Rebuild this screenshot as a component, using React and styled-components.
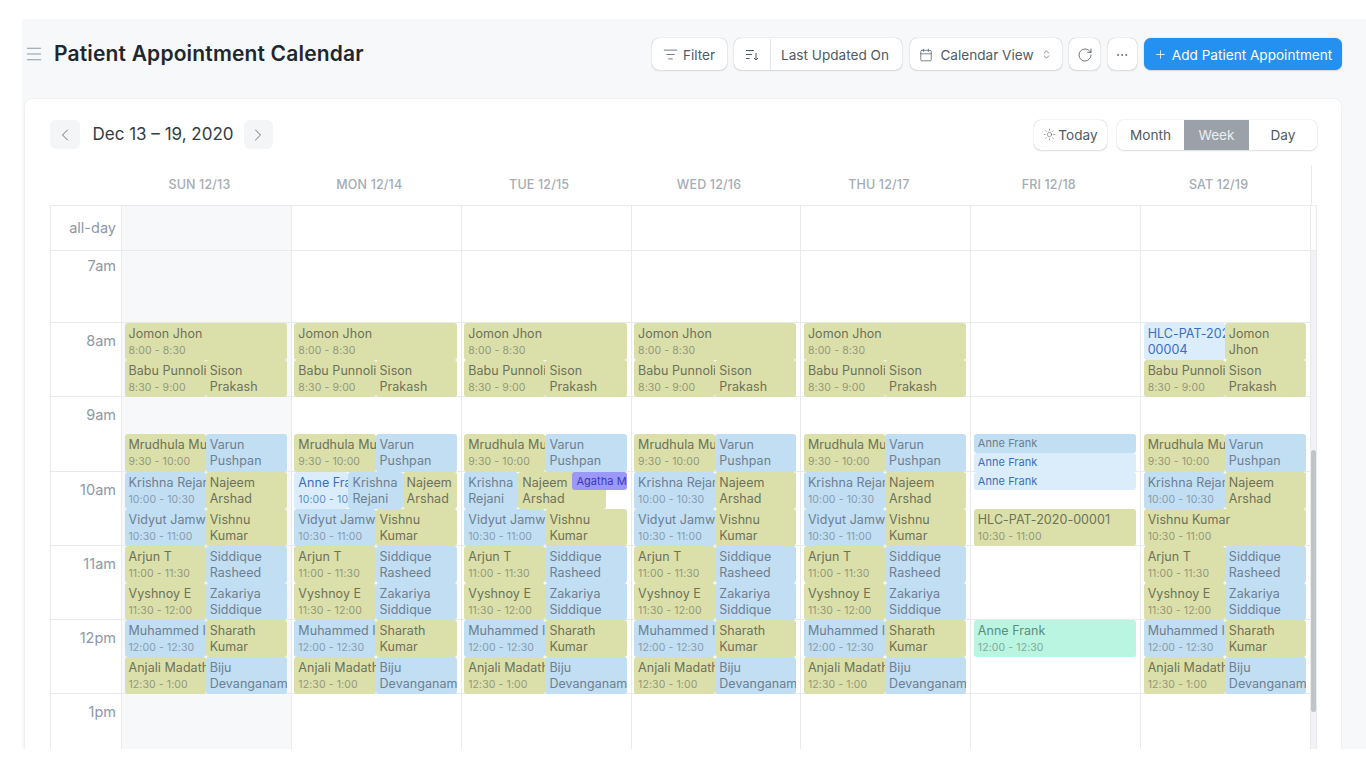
import styled, { createGlobalStyle } from 'styled-components'
import { Calendar, ChevronLeft, ChevronRight, ChevronsUpDown, Ellipsis, ListFilter, Menu, Plus, RotateCw, Sun } from 'lucide-react'

const GlobalStyle = createGlobalStyle`
    html, body{
        margin: 0;
        height: 768px;
        overflow: hidden;
        background: #fff;
        font-family: Inter, "Liberation Sans", sans-serif;
    }
    *{ box-sizing: border-box; }
`

const tones = {
    green: { bg: '#dbe0ab', title: '#6e7158', time: '#94977a' },
    blue: { bg: '#c2def2', title: '#6d7e91', time: '#879bad' },
    light: { bg: '#dbedfb', title: '#3a6dbf', time: '#5d8fcc' },
    mint: { bg: '#b9f5e1', title: '#5c8d7c', time: '#7fab9b' },
    purple: { bg: '#9b98f6', title: '#3c39c2', time: '#3c39c2' },
}

const Page = styled.div`
    height: 768px;
    padding: 19px 0 19px 22px;
`
const Panel = styled.main`
    height: 730px;
    overflow: hidden;
    background: #f7f8f9;
    padding: 0 24px 0 2px;
`
const Header = styled.header`
    display: flex;
    align-items: center;
    justify-content: space-between;
    height: 79px;
    padding: 0 0 9px 0;
`
const TitleGroup = styled.div`
    display: flex;
    align-items: center;
    gap: 10px;
    color: #8d99a6;
`
const PageTitle = styled.h1`
    margin: -2px 0 0;
    font-size: 21px;
    font-weight: 600;
    letter-spacing: .17px;
    color: #1f272e;
`
const Actions = styled.div`
    display: flex;
    align-items: center;
    gap: 7.5px;
`
const Button = styled.button`
    display: flex;
    align-items: center;
    justify-content: center;
    gap: ${p => p.$gap || 5}px;
    height: 32px;
    width: ${p => p.$width}px;
    padding: 1px 0 0;
    border: 0;
    border-radius: 7px;
    background: ${p => p.$primary ? '#2490ef' : '#fff'};
    color: ${p => p.$primary ? '#fff' : '#505a62'};
    box-shadow: 0 0 1px rgba(0, 0, 0, .35), 0 1px 2px rgba(0, 0, 0, .1);
    font: 13.6px Inter, sans-serif;
`
const SortButton = styled(Button)`
    justify-content: flex-start;
`
const TodayButton = styled(Button)`
    height: 30px;
    padding: 0;
`
const SortIcon = styled.span`
    display: flex;
    align-items: center;
    justify-content: center;
    width: 37px;
    height: 100%;
    border-right: 1px solid #e2e6e9;
`
const SortLabel = styled.span`
    padding-left: 5px;
`
const Card = styled.section`
    background: #fff;
    border: 1px solid #eef0f2;
    border-radius: 8px 8px 0 0;
    padding: 20px 24px 0 25px;
    height: 660px;
`
const Toolbar = styled.div`
    display: flex;
    align-items: center;
    justify-content: space-between;
    height: 31px;
    margin-bottom: 15px;
`
const DateNav = styled.div`
    display: flex;
    align-items: center;
`
const NavButton = styled.button`
    display: flex;
    align-items: center;
    justify-content: center;
    width: 29.5px;
    height: 29px;
    padding: 0;
    border: 0;
    border-radius: 6px;
    background: #f4f5f6;
    color: #6b7680;
`
const DateRange = styled.h2`
    margin: -1px 10px 0 13px;
    font-size: 17px;
    font-weight: 400;
    color: #333c44;
`
const ViewControls = styled.div`
    display: flex;
    align-items: center;
    gap: 10px;
`
const ViewSwitch = styled.div`
    display: flex;
    height: 30px;
    border-radius: 7px;
    overflow: hidden;
    box-shadow: 0 0 1px rgba(0, 0, 0, .35), 0 1px 2px rgba(0, 0, 0, .1);
`
const ViewOption = styled.div`
    display: flex;
    align-items: center;
    justify-content: center;
    width: ${p => p.$width}px;
    font-size: 13.6px;
    background: ${p => p.$active ? '#9aa1a9' : '#fff'};
    color: ${p => p.$active ? '#eceef0' : '#505a62'};
`
const gridColumns = '71px repeat(7, 1fr) 5px'
const HeadRow = styled.div`
    display: grid;
    grid-template-columns: ${gridColumns};
    height: 41px;
    border-bottom: 1px solid #e8eaed;
    padding: 0 1px;
`
const DayLabel = styled.div`
    display: flex;
    align-items: center;
    justify-content: center;
    padding: 0 15px 2px 0;
    font-size: 12.5px;
    font-weight: 500;
    letter-spacing: .15px;
    color: #a5acb4;
`
const HeadEnd = styled.div`
    border-left: 1px solid #e8eaed;
    grid-column: 9;
`
const AllDayRow = styled.div`
    display: grid;
    grid-template-columns: ${gridColumns};
    height: 45px;
    border: 1px solid #e8eaed;
    border-width: 0 1px 1px 1px;
`
const AxisLabel = styled.div`
    display: flex;
    align-items: center;
    justify-content: flex-end;
    padding: 0 5px 2px 0;
    font-size: 14.5px;
    color: #8d99a6;
    border-right: 1px solid #e8eaed;
`
const AllDayCell = styled.div`
    background: ${p => p.$today ? '#f7f8f9' : '#fff'};
    border-right: 1px solid #e8eaed;
`
const BodyRow = styled.div`
    display: grid;
    grid-template-columns: ${gridColumns};
    height: 500px;
    border-left: 1px solid #e8eaed;
    border-right: 1px solid #e8eaed;
`
const TimeAxis = styled.div`
    display: flex;
    flex-direction: column;
    border-right: 1px solid #e8eaed;
`
const TimeCell = styled.div`
    height: ${p => p.$height}px;
    flex: none;
    padding: ${p => p.$first ? 5 : 8}px 5px 0 0;
    text-align: right;
    font-size: 14.5px;
    line-height: 20px;
    color: #8d99a6;
    border-bottom: 1px solid #e8eaed;
`
const DayColumn = styled.div`
    display: grid;
    grid-template-columns: 2.5px repeat(24, 1fr) 4px;
    grid-template-rows: 72px repeat(20, 18.575px) 120px;
    background: ${p => p.$today ? '#f7f8f9' : '#fff'};
    border-right: 1px solid #e8eaed;
    min-width: 0;
`
const HourSlot = styled.div`
    grid-column: 1 / -1;
    border-bottom: 1px solid #e8eaed;
`
const Event = styled.article`
    z-index: 1;
    min-width: 0;
    overflow: hidden;
    border-radius: 3px;
    padding: ${p => p.$small ? '0 4px' : '3px 4px 0'};
    background: ${p => tones[p.$tone].bg};
`
const EventTitle = styled.div`
    font-size: ${p => p.$small ? 11 : 12.5}px;
    line-height: ${p => p.$small ? 19 : 16}px;
    font-weight: 400;
    letter-spacing: .05px;
    white-space: ${p => p.$wrap ? 'normal' : 'pre'};
    color: ${p => tones[p.$tone].title};
`
const EventTime = styled.div`
    margin-top: 1px;
    font-size: 10.5px;
    line-height: 16px;
    letter-spacing: .1px;
    white-space: nowrap;
    color: ${p => tones[p.$tone].time};
`
const ScrollTrack = styled.div`
    background: #f1f2f3;
    padding-top: 199px;
`
const ScrollThumb = styled.div`
    height: 262px;
    border-radius: 3px;
    background: #c1c4c9;
`

const DAYS = ['SUN 12/13', 'MON 12/14', 'TUE 12/15', 'WED 12/16', 'THU 12/17', 'FRI 12/18', 'SAT 12/19']
const HOURS = [['7am', 72], ['8am', 74.3], ['9am', 74.3], ['10am', 74.3], ['11am', 74.3], ['12pm', 74.3], ['1pm', 120]]

// at = quarter hours after 8am, from/to = columns out of 24, no time shown on wrapped ones
const ev = (at, from, to, tone, title, time, extra = {}) => ({ at, from, to, tone, title, time, len: 2, ...extra })
const side = (at, tone, title) => ev(at, 12, 24, tone, title, null, { wrap: true })

const top = [
    ev(0, 0, 24, 'green', 'Jomon Jhon', '8:00 - 8:30'),
    ev(2, 0, 12, 'green', 'Babu Punnoli', '8:30 - 9:00'),
    side(2, 'green', 'Sison Prakash'),
    ev(6, 0, 12, 'green', 'Mrudhula Muraleedharan', '9:30 - 10:00'),
    side(6, 'blue', 'Varun Pushpan'),
]
const tenAm = [
    ev(8, 0, 12, 'blue', 'Krishna Rejani', '10:00 - 10:30'),
    side(8, 'green', 'Najeem Arshad'),
]
const tenThirty = [
    ev(10, 0, 12, 'blue', 'Vidyut Jamwal', '10:30 - 11:00'),
    side(10, 'green', 'Vishnu Kumar'),
]
const bottom = [
    ev(12, 0, 12, 'green', 'Arjun T', '11:00 - 11:30'),
    side(12, 'blue', 'Siddique Rasheed'),
    ev(14, 0, 12, 'green', 'Vyshnoy E', '11:30 - 12:00'),
    side(14, 'blue', 'Zakariya Siddique'),
    ev(16, 0, 12, 'blue', 'Muhammed Ibrahim', '12:00 - 12:30'),
    side(16, 'green', 'Sharath Kumar'),
    ev(18, 0, 12, 'green', 'Anjali Madathil', '12:30 - 1:00'),
    side(18, 'blue', 'Biju Devanganam'),
]
const plainDay = [...top, ...tenAm, ...tenThirty, ...bottom]

const WEEK = [
    plainDay,
    [
        ...top,
        ev(8, 0, 8, 'light', 'Anne Frank', '10:00 - 10:30'),
        ev(8, 8, 16, 'blue', 'Krishna Rejani', null, { wrap: true }),
        ev(8, 16, 24, 'green', 'Najeem Arshad', null, { wrap: true }),
        ...tenThirty,
        ...bottom,
    ],
    [
        ...top,
        ev(8, 0, 8, 'blue', 'Krishna Rejani', null, { wrap: true }),
        ev(8, 8, 21, 'green', 'Najeem Arshad', null, { wrap: true }),
        ev(8, 16, 24, 'purple', 'Agatha Mary', null, { len: 1, small: true }),
        ...tenThirty,
        ...bottom,
    ],
    plainDay,
    plainDay,
    [
        ev(6, 0, 24, 'blue', 'Anne Frank', null, { len: 1, small: true }),
        ev(7, 0, 24, 'light', 'Anne Frank', null, { len: 1, small: true }),
        ev(8, 0, 24, 'light', 'Anne Frank', null, { len: 1, small: true }),
        ev(10, 0, 24, 'green', 'HLC-PAT-2020-00001', '10:30 - 11:00'),
        ev(16, 0, 24, 'mint', 'Anne Frank', '12:00 - 12:30'),
    ],
    [
        ev(0, 0, 12, 'light', 'HLC-PAT-2020-\n00004', null),
        side(0, 'green', 'Jomon Jhon'),
        ...top.slice(1),
        ...tenAm,
        ev(10, 0, 24, 'green', 'Vishnu Kumar', '10:30 - 11:00'),
        ...bottom,
    ],
]

function SortLines(){
    return(
        <svg width="16" height="16" viewBox="0 0 16 16" fill="none" stroke="#505a62" strokeWidth="1">
            <path d="M2 3.5h8M2 7.5h6M2 11.5h3.5M12 6v7M10 11l2 2 2-2" />
        </svg>
    )
}

function CalendarEvent({ event }){
    const { at, from, to, len, tone, title, time, wrap, small } = event
    const place = { gridRow: `${at + 2} / span ${len}`, gridColumn: `${from + 2} / ${to + 2}` }
    return(
        <Event $tone={tone} $small={small} style={place}>
            <EventTitle $tone={tone} $small={small} $wrap={wrap}>{title}</EventTitle>
            {time && <EventTime $tone={tone}>{time}</EventTime>}
        </Event>
    )
}

function Day({ events, today }){
    const slots = [1, '2 / span 4', '6 / span 4', '10 / span 4', '14 / span 4', '18 / span 4', 22]
    return(
        <DayColumn $today={today}>
            {slots.map(row => <HourSlot key={row} style={{ gridRow: row }} />)}
            {events.map(event => <CalendarEvent key={`${event.at}-${event.from}`} event={event} />)}
        </DayColumn>
    )
}

export default function App(){
    return(
        <Page>
            <GlobalStyle />
            <Panel>
                <Header>
                    <TitleGroup>
                        <Menu size={20} strokeWidth={1.25} />
                        <PageTitle>Patient Appointment Calendar</PageTitle>
                    </TitleGroup>
                    <Actions>
                        <Button $width={75}><ListFilter size={15} strokeWidth={1.25} />Filter</Button>
                        <SortButton $width={168}>
                            <SortIcon><SortLines /></SortIcon>
                            <SortLabel>Last Updated On</SortLabel>
                        </SortButton>
                        <Button $width={152} $gap={7}><Calendar size={14} strokeWidth={1.25} />Calendar View<ChevronsUpDown size={11} strokeWidth={1.5} /></Button>
                        <Button $width={31}><RotateCw size={16} strokeWidth={1.25} /></Button>
                        <Button $width={29}><Ellipsis size={14} strokeWidth={1.25} /></Button>
                        <Button $width={198} $primary><Plus size={13} strokeWidth={1.5} />Add Patient Appointment</Button>
                    </Actions>
                </Header>
                <Card>
                    <Toolbar>
                        <DateNav>
                            <NavButton><ChevronLeft size={20} strokeWidth={1.2} /></NavButton>
                            <DateRange>Dec 13 – 19, 2020</DateRange>
                            <NavButton><ChevronRight size={20} strokeWidth={1.2} /></NavButton>
                        </DateNav>
                        <ViewControls>
                            <TodayButton $width={73} $gap={2}><Sun size={13} strokeWidth={1} />Today</TodayButton>
                            <ViewSwitch>
                                <ViewOption $width={67}>Month</ViewOption>
                                <ViewOption $width={65} $active>Week</ViewOption>
                                <ViewOption $width={68}>Day</ViewOption>
                            </ViewSwitch>
                        </ViewControls>
                    </Toolbar>
                    <HeadRow>
                        <div />
                        {DAYS.map(day => <DayLabel key={day}>{day}</DayLabel>)}
                        <HeadEnd />
                    </HeadRow>
                    <AllDayRow>
                        <AxisLabel>all-day</AxisLabel>
                        {DAYS.map((day, i) => <AllDayCell key={day} $today={i === 0} />)}
                    </AllDayRow>
                    <BodyRow>
                        <TimeAxis>
                            {HOURS.map(([label, height], i) => <TimeCell key={label} $height={height} $first={i === 0}>{label}</TimeCell>)}
                        </TimeAxis>
                        {WEEK.map((events, i) => <Day key={DAYS[i]} events={events} today={i === 0} />)}
                        <ScrollTrack><ScrollThumb /></ScrollTrack>
                    </BodyRow>
                </Card>
            </Panel>
        </Page>
    )
}
